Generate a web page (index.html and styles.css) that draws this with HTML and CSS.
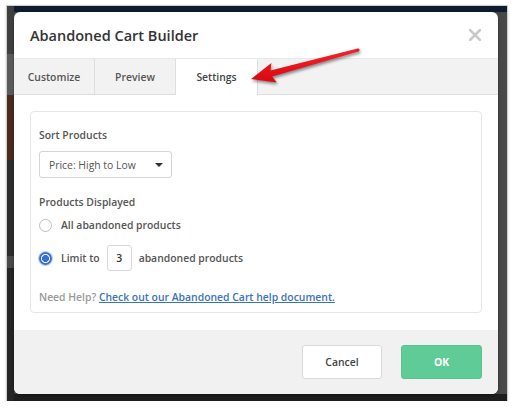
FILE: index.html
```html
<!DOCTYPE html>
<html>
  <head>
    <meta charset="UTF-8" />
    <title>Abandoned Cart Builder</title>
    <link rel="stylesheet" href="styles.css">
  </head>
  <body>
    <div class="frame">
      <div class="modal">
        <div class="modal-header">
          <h1 class="modal-title">Abandoned Cart Builder</h1>
          <button class="close" aria-label="Close">
            <svg width="12" height="12" viewBox="0 0 12 12">
              <path d="M1 1 L11 11 M11 1 L1 11" stroke="#c9c9c9" stroke-width="2.6" stroke-linecap="square" />
            </svg>
          </button>
        </div>
        <div class="tabs">
          <div class="tab">Customize</div>
          <div class="tab">Preview</div>
          <div class="tab active">Settings</div>
        </div>
        <div class="modal-body">
          <div class="panel">
            <div class="label">Sort Products</div>
            <div class="select">
              <span>Price: High to Low</span>
              <span class="caret"></span>
            </div>
            <div class="label label-gap">Products Displayed</div>
            <div class="radio-row">
              <span class="radio"></span>
              <span>All abandoned products</span>
            </div>
            <div class="radio-row limit-row">
              <span class="radio checked"></span>
              <span>Limit to</span>
              <span class="num-input">3</span>
              <span>abandoned products</span>
            </div>
            <div class="help">
              Need Help? <a href="#">Check out our Abandoned Cart help document.</a>
            </div>
          </div>
        </div>
        <div class="modal-footer">
          <button class="btn btn-cancel">Cancel</button>
          <button class="btn btn-ok">OK</button>
        </div>
      </div>
    </div>
    <svg class="arrow" width="514" height="409" viewBox="0 0 514 409">
      <defs>
        <linearGradient id="red" x1="0" y1="0" x2="0" y2="1">
          <stop offset="0" stop-color="#f4242a" />
          <stop offset="1" stop-color="#d8080e" />
        </linearGradient>
      </defs>
      <polygon fill="url(#red)" points="251,79 276.8,82.6 272.1,76.4 358.4,51.6 357.6,48.4 270.5,70.6 271.4,63 " />
      <circle cx="358" cy="50" r="1.6" fill="#ec161c" />
    </svg>
  </body>
</html>
```

FILE: styles.css
```css
:root {
  --text: #555;
  --border: #dedede;
  --font: "Open Sans", "Liberation Sans", sans-serif;
}
body {
  margin: 0;
  background: #fff;
  font-family: var(--font);
  color: var(--text);
}
.frame {
  margin: 6px 7px 0 7px;
  height: 395px;
  padding: 6px 9px 0 7px;
  box-sizing: border-box;
  background:
    linear-gradient(to bottom, #3f3f3f 0 48px, #5b5b5b 48px 89px, #4c2a22 89px 154px, #2e2e2e 154px 250px, #4a4a4a 250px 262px, #252525 262px) left top / 7px 100% no-repeat,
    linear-gradient(to bottom, #0f1b2e 0 6px, #484848 6px 388px, #1d1d1d 388px);
  box-shadow: 0 0 0 1px #cfcfcf, 0 1px 3px rgba(0, 0, 0, 0.35);
}
.modal {
  height: 382px;
  background: #fff;
  border-radius: 6px;
  overflow: hidden;
  display: flex;
  flex-direction: column;
  box-shadow: 0 1px 3px rgba(0, 0, 0, 0.4);
}
.modal-header {
  height: 46px;
  display: flex;
  align-items: center;
  justify-content: space-between;
  padding: 0 16px;
}
.modal-title {
  margin: 0;
  font-size: 14.5px;
  font-weight: 600;
  color: #333;
  padding-top: 1px;
}
.close {
  border: none;
  background: none;
  padding: 0;
  margin-right: 1px;
  display: flex;
  cursor: pointer;
}
.tabs {
  display: flex;
  height: 37px;
  background: #f2f2f2;
  border-top: 1px solid #e8e8e8;
  border-bottom: 1px solid var(--border);
  box-sizing: border-box;
}
.tab {
  width: 81px;
  display: flex;
  align-items: center;
  justify-content: center;
  font-size: 10.4px;
  font-weight: 600;
  color: #555;
  border-right: 1px solid var(--border);
  box-sizing: border-box;
}
.tab.active {
  width: 82px;
  background: #fff;
  margin-bottom: -1px;
  color: #444;
}
.modal-body {
  padding: 16px 16px 17px;
}
.panel {
  height: 202px;
  box-sizing: border-box;
  border: 1px solid #e6e6e6;
  border-radius: 4px;
  padding: 15px 8px 0;
}
.label {
  font-size: 10.4px;
  font-weight: 600;
  line-height: 16px;
}
.label-gap {
  margin-top: 16px;
}
.select {
  margin-top: 8px;
  width: 133px;
  height: 27px;
  box-sizing: border-box;
  border: 1px solid #d4d4d4;
  border-radius: 3px;
  display: flex;
  align-items: center;
  justify-content: space-between;
  padding: 0 8px 0 9px;
  font-size: 10.4px;
  color: #555;
}
.caret {
  width: 0;
  height: 0;
  border-left: 4px solid transparent;
  border-right: 4px solid transparent;
  border-top: 4px solid #333;
}
.radio-row {
  display: flex;
  align-items: center;
  gap: 8px;
  font-size: 10.4px;
  font-weight: 600;
  margin-top: 6px;
  height: 18px;
}
.limit-row {
  margin-top: 11px;
  height: 26px;
  gap: 8px;
}
.radio {
  width: 13px;
  height: 13px;
  box-sizing: border-box;
  border: 1px solid #bdbdbd;
  border-radius: 50%;
  background: #fff;
  margin-right: 1px;
}
.radio.checked {
  border: 2px solid #3a6fd0;
  box-shadow: 0 0 0 1px #b8cdf0;
  background: radial-gradient(circle, #3a6fd0 0 3.2px, #fff 3.8px);
}
.num-input {
  width: 25px;
  height: 26px;
  box-sizing: border-box;
  border: 1px solid #d8d8d8;
  border-radius: 3px;
  display: flex;
  align-items: center;
  justify-content: center;
  color: #333;
  margin: 0 -1px 0 -1px;
}
.help {
  margin-top: 19px;
  font-size: 10.4px;
  font-weight: 600;
  color: #999;
}
.help a {
  color: #3b72ba;
}
.modal-footer {
  flex: 1;
  background: #f1f1f1;
  display: flex;
  justify-content: flex-end;
  align-items: flex-start;
  gap: 19px;
  padding: 15px 16px 0;
}
.btn {
  height: 34px;
  border-radius: 3px;
  font-family: var(--font);
  font-size: 10.4px;
  font-weight: 600;
  cursor: pointer;
}
.btn-cancel {
  width: 80px;
  background: #fff;
  border: 1px solid #d9d9d9;
  color: #444;
}
.btn-ok {
  width: 81px;
  background: #5fcb97;
  border: 1px solid #58c38f;
  color: #fff;
  font-weight: 700;
}
.arrow {
  position: absolute;
  top: 0;
  left: 0;
  pointer-events: none;
  filter: drop-shadow(1px 2px 1.5px rgba(0, 0, 0, 0.45));
}
```
